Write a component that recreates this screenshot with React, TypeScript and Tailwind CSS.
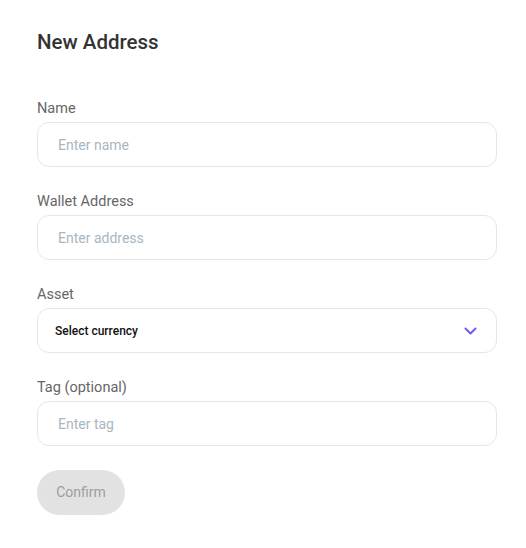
import React from "react";

const fieldClass =
  "h-[45px] w-full rounded-[12px] border border-[#e6e6e6] bg-white px-5 text-[14px] text-[#333] outline-none placeholder:text-[#a9b6bf]";

const labelClass = "mb-[3px] pt-[2px] text-[14.5px] leading-5 text-[#666]";

const Field: React.FC<{ label: string; placeholder: string }> = ({
  label,
  placeholder,
}) => (
  <div className="flex flex-col">
    <label className={labelClass}>{label}</label>
    <input className={fieldClass} placeholder={placeholder} />
  </div>
);

export default function App() {
  return (
    <div
      className="min-h-[548px] bg-white pl-[37px] pt-[30px]"
      style={{ fontFamily: "Roboto, 'Liberation Sans', sans-serif" }}
    >
      <div className="w-[460px]">
        <h1 className="text-[20.5px] font-medium leading-6 text-[#333]">
          New Address
        </h1>

        <div className="mt-[43px] flex flex-col gap-[23px]">
          <Field label="Name" placeholder="Enter name" />
          <Field label="Wallet Address" placeholder="Enter address" />

          <div className="flex flex-col">
            <label className={labelClass}>Asset</label>
            <button className="flex h-[45px] w-full items-center justify-between rounded-[12px] border border-[#e6e6e6] bg-white pl-[17px] pr-[19px]">
              <span className="text-[12px] font-medium text-[#111]">
                Select currency
              </span>
              <svg
                width="13"
                height="8"
                viewBox="0 0 13 8"
                fill="none"
                stroke="#6b5cf5"
                strokeWidth="2"
                strokeLinecap="round"
                strokeLinejoin="round"
              >
                <path d="M1.5 1.5l5 5 5-5" />
              </svg>
            </button>
          </div>

          <Field label="Tag (optional)" placeholder="Enter tag" />
        </div>

        <button className="mt-[24px] h-[45px] w-[88px] rounded-full bg-[#e2e2e2] text-[14px] font-normal text-[#9e9e9e]">
          Confirm
        </button>
      </div>
    </div>
  );
}
